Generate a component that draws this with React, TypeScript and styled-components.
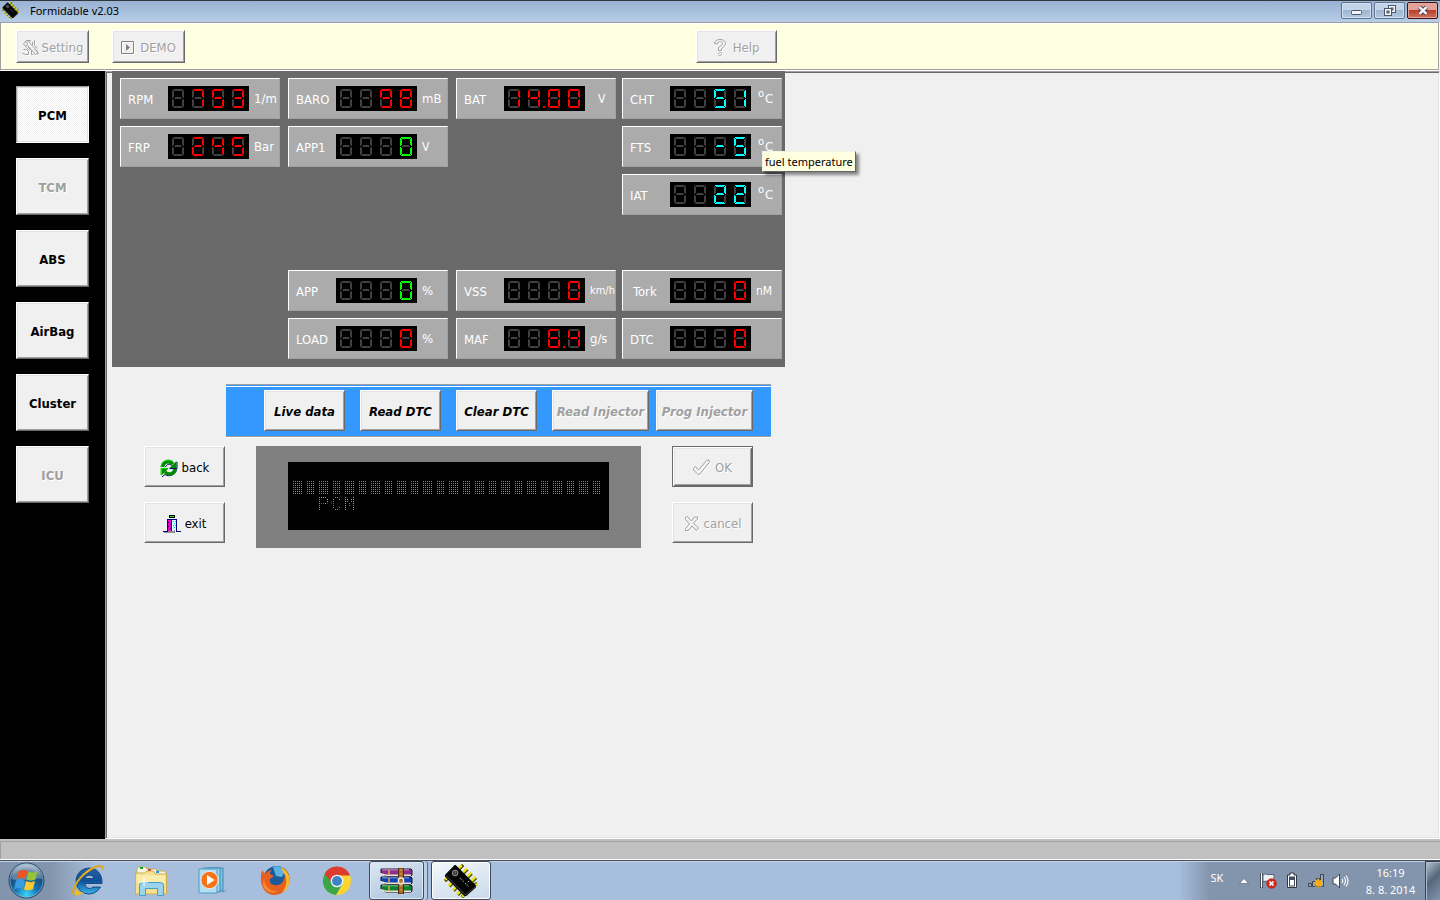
import React from "react";
import styled, { createGlobalStyle, css } from "styled-components";

const ui = `"DejaVu Sans Condensed", "DejaVu Sans", sans-serif`;
const shell = `"Noto Sans", "Open Sans", sans-serif`;

const GlobalStyle = createGlobalStyle`
  *, *::before, *::after { box-sizing: border-box; }
  body { margin: 0; background: #f0f0f0; font-family: ${ui}; font-size: 13px; line-height: 16px; }
  button { font: inherit; color: inherit; padding: 0; margin: 0; cursor: default; }
  svg { display: block; flex: none; }
`;

const Window = styled.div`
  display: flex;
  flex-direction: column;
  min-height: 100vh;
`;

/* ---------- title bar ---------- */

const TitleBar = styled.header`
  display: flex;
  align-items: center;
  height: 22px;
  padding: 0 2px 2px;
  border-top: 1px solid #33373e;
  background: linear-gradient(#98b2d2, #b7cde7);
`;

const Title = styled.h1`
  flex: 1;
  margin: 0 0 0 11px;
  font: 400 11px/16px ${shell};
  color: #000;
`;

const Controls = styled.div`
  display: flex;
  gap: 2px;
`;

const ControlButton = styled.button<{ $danger?: boolean }>`
  display: grid;
  place-items: center;
  width: 31px;
  height: 17px;
  border: 1px solid ${(p) => (p.$danger ? "#4a0d14" : "#62748f")};
  border-radius: 2px;
  box-shadow: inset 0 0 0 1px ${(p) => (p.$danger ? "#e2a79f" : "#cfdff0")};
  background: ${(p) =>
    p.$danger
      ? "linear-gradient(#e3a299 0 45%, #b93f27 50%, #cf7460)"
      : "linear-gradient(#c3d4e8 0 45%, #9eb6d2 50%, #b4c9e2)"};
`;

/* ---------- beige tool bar ---------- */

const ToolBar = styled.div`
  height: 48px;
  margin: 0 1px 1px 0;
  padding: 7px 15px;
  border: 1px solid #a0a0a0;
  box-shadow: inset 1px 1px 0 #fff, 1px 1px 0 #fff;
  background: #ffffe1;
`;

const ToolGroup = styled.div`
  display: flex;
  gap: 23px;
  max-width: 761px;

  > :last-child { margin-left: auto; }
`;

const PushButton = styled.button<{ $w?: number; $h?: number; $bold?: boolean; $italic?: boolean; $isDefault?: boolean; $gap?: number }>`
  display: flex;
  align-items: center;
  justify-content: center;
  gap: ${(p) => p.$gap ?? 5}px;
  flex: none;
  width: ${(p) => p.$w ?? 81}px;
  height: ${(p) => p.$h ?? 41}px;
  padding-top: 2px;
  border: 1px solid;
  border-color: #fff #696969 #696969 #fff;
  box-shadow: inset 1px 1px 0 #e3e3e3, inset -1px -1px 0 #a0a0a0;
  background: #f0f0f0;
  color: #000;
  white-space: nowrap;
  font-weight: ${(p) => (p.$bold ? 700 : 400)};
  font-style: ${(p) => (p.$italic ? "italic" : "normal")};

  ${(p) =>
    p.$isDefault &&
    css`
      border-color: #696969;
      box-shadow: inset 1px 1px 0 #fff, inset -1px -1px 0 #696969, inset 2px 2px 0 #e3e3e3, inset -2px -2px 0 #a0a0a0;
    `}

  &:disabled {
    color: #a0a0a0;
    text-shadow: 1px 1px 0 #fff;
  }

  &[aria-pressed="true"] {
    border-color: #a0a0a0 #fff #fff #a0a0a0;
    box-shadow: inset 1px 1px 0 #d8d8d8, inset -1px -1px 0 #e3e3e3;
    background: repeating-conic-gradient(#fff 0 25%, #f0f0f0 0 50%) 0 0 / 2px 2px;
  }
`;

/* ---------- body ---------- */

const Body = styled.div`
  display: flex;
  flex: 1;
`;

const SideBar = styled.nav`
  display: flex;
  flex-direction: column;
  gap: 15px;
  width: 105px;
  padding: 15px 16px;
  background: #000;
`;

const Main = styled.main`
  flex: 1;
  padding: 0 5px;
  border: 1px solid;
  border-color: #a0a0a0 #fff #fff #a0a0a0;
  box-shadow: inset 1px 1px 0 #696969, inset -1px -1px 0 #e3e3e3;
  background: #f0f0f0;
`;

const GaugePanel = styled.section`
  display: grid;
  grid-template-columns: 168px 168px 166px 160px;
  grid-template-rows: repeat(6, 41px);
  row-gap: 7px;
  width: max-content;
  margin: -1px 0 0 1px;
  padding: 7px 3px 8px 8px;
  background: #696969;
`;

const GaugeBox = styled.div<{ $col: number; $row: number }>`
  position: relative;
  grid-column: ${(p) => p.$col};
  grid-row: ${(p) => p.$row};
  display: flex;
  align-items: center;
  width: 160px;
  padding-left: 7px;
  border: 1px solid;
  border-color: #fff #a0a0a0 #a0a0a0 #fff;
  background: #ababab;
  color: #fff;
`;

const GaugeLabel = styled.span<{ $indent?: boolean }>`
  width: 40px;
  padding-left: ${(p) => (p.$indent ? 3 : 0)}px;
  padding-top: 2px;
`;

const GaugeUnit = styled.span<{ $size?: number; $indent?: boolean }>`
  padding-left: ${(p) => (p.$indent ? 13 : 5)}px;
  font-size: ${(p) => p.$size ?? 13}px;

  sup {
    padding: 0 1px 0 2px;
    font-size: 11px;
    line-height: 1px;
  }
`;

const ToolTip = styled.div`
  position: absolute;
  z-index: 2;
  left: 139px;
  top: 24px;
  padding: 2px;
  border: 1px solid;
  border-color: #f4f4e4 #646464 #646464 #f4f4e4;
  box-shadow: 3px 3px 3px rgba(0, 0, 0, 0.45);
  background: #ffffe1;
  color: #000;
  font: 11px/15px ${shell};
  white-space: nowrap;
`;

/* Order: top, top-right, bottom-right, bottom, bottom-left, top-left, middle */
const SEGMENTS: Array<Array<[number, number, number, number]>> = [
  [[1, 0, 10, 1], [2, 1, 8, 1]],
  [[11, 1, 1, 8], [10, 2, 1, 6]],
  [[11, 10, 1, 8], [10, 11, 1, 6]],
  [[2, 17, 8, 1], [1, 18, 10, 1]],
  [[0, 10, 1, 8], [1, 11, 1, 6]],
  [[0, 1, 1, 8], [1, 2, 1, 6]],
  [[2, 9, 8, 1], [3, 8, 6, 1]],
];

const LIT: Record<string, string> = {
  "0": "012345", "1": "12", "2": "01346", "3": "01236", "4": "1256",
  "5": "02356", "6": "023456", "7": "012", "8": "0123456", "9": "012356",
  "-": "6", " ": "",
};

const LedDisplay = ({ value, color }: { value: string; color: string }) => {
  const dot = value.indexOf(".");
  const digits = value.replace(".", "").padStart(4, " ").split("");
  const dotAfter = dot < 0 ? -1 : 4 - (value.length - 1 - dot);
  return (
    <svg width="81" height="25" shapeRendering="crispEdges" role="img" aria-label={value}>
      <rect width="81" height="25" fill="#000" />
      {digits.map((d, i) =>
        SEGMENTS.map((rects, s) =>
          rects.map(([x, y, w, h], k) => (
            <rect
              key={`${i}-${s}-${k}`}
              x={x + 4 + 20 * i}
              y={y + 3}
              width={w}
              height={h}
              fill={LIT[d].includes(String(s)) ? color : "#404040"}
            />
          ))
        )
      )}
      {dotAfter > 0 && <rect x={20 * dotAfter - 1} y="20" width="2" height="2" fill={color} />}
    </svg>
  );
};

const RED = "#ff0000";
const GREEN = "#00ff00";
const CYAN = "#00ffff";

type Gauge = {
  label: string; value: string; unit: string; color: string; col: number; row: number;
  unitSize?: number; indent?: boolean; unitIndent?: boolean; tip?: string;
};

const GAUGES: Gauge[] = [
  { label: "RPM", value: "753", unit: "1/m", color: RED, col: 1, row: 1 },
  { label: "BARO", value: "98", unit: "mB", color: RED, col: 2, row: 1 },
  { label: "BAT", value: "14.00", unit: "V", color: RED, col: 3, row: 1, unitIndent: true, unitSize: 12 },
  { label: "CHT", value: "51", unit: "°C", color: CYAN, col: 4, row: 1 },
  { label: "FRP", value: "245", unit: "Bar", color: RED, col: 1, row: 2 },
  { label: "APP1", value: "0", unit: "V", color: GREEN, col: 2, row: 2, unitSize: 12 },
  { label: "FTS", value: "-5", unit: "°C", color: CYAN, col: 4, row: 2, tip: "fuel temperature" },
  { label: "IAT", value: "22", unit: "°C", color: CYAN, col: 4, row: 3 },
  { label: "APP", value: "0", unit: "%", color: GREEN, col: 2, row: 5 },
  { label: "VSS", value: "0", unit: "km/h", color: RED, col: 3, row: 5, unitSize: 11 },
  { label: "Tork", value: "0", unit: "nM", color: RED, col: 4, row: 5, unitSize: 12, indent: true },
  { label: "LOAD", value: "0", unit: "%", color: RED, col: 2, row: 6 },
  { label: "MAF", value: "6.4", unit: "g/s", color: RED, col: 3, row: 6 },
  { label: "DTC", value: "0", unit: "", color: RED, col: 4, row: 6 },
];

const ActionBar = styled.div`
  display: flex;
  gap: 15px;
  width: 545px;
  height: 54px;
  margin: 17px 0 8px 115px;
  padding: 5px 0 0 38px;
  border-top: 1px solid #a0a0a0;
  border-bottom: 1px solid #fff;
  background: linear-gradient(#39f 0 1px, #fff 1px 2px, #39f 2px calc(100% - 1px), #a0a0a0 calc(100% - 1px));

  > :last-child { margin-left: -8px; }
`;

const Console = styled.div`
  display: flex;
  align-items: flex-start;
  gap: 31px;
  margin-left: 33px;
`;

const ButtonColumn = styled.div`
  display: flex;
  flex-direction: column;
  gap: 15px;
`;

const LcdFrame = styled.div`
  width: 385px;
  padding: 16px 32px 18px;
  background: #808080;
`;

const LcdScreen = styled.div`
  height: 68px;
  padding: 19px 4px 0 5px;
  background: #000;
`;

const LcdRow = styled.div`
  display: grid;
  grid-template-columns: repeat(24, 13px);
  height: 16px;
  color: #20ff20;
  font: 20px/16px "Liberation Mono", monospace;
`;

const LcdCell = styled.span<{ $blank?: boolean }>`
  display: flex;
  justify-content: center;
  width: 9px;
  height: 13px;
  ${(p) =>
    p.$blank &&
    css`
      background: #858585;
    `}
`;

/* Lets light through only on every second pixel, like the dots of the panel. */
const DotMask = styled.div`
  mask: conic-gradient(#000 25%, transparent 0) -1px 0 / 2px 2px;
`;

const StatusBar = styled.footer`
  height: 21px;
  border-top: 2px solid #c0c0c0;
  border-bottom: 1px solid #fff;
  box-shadow: inset 1px 1px 0 #a0a0a0;
  background: #c0c0c0;
`;

/* ---------- taskbar ---------- */

const TaskBar = styled.nav`
  display: flex;
  height: 40px;
  border-top: 1px solid #454e5b;
  box-shadow: inset 0 1px 0 #c3d3e8;
  background: linear-gradient(90deg, #8395ac 50px, #a7bfdd 96px, #a7bfdd calc(100% - 262px), #8395ac calc(100% - 230px));
  font: 11px/17px ${shell};
  color: #fff;
`;

const StartButton = styled.button`
  width: 59px;
  padding-left: 8px;
  border: 0;
  background: none;
`;

const TaskList = styled.div`
  display: flex;
  flex: 1;
  gap: 2px;
`;

const TaskButton = styled.button<{ $open?: boolean; $stacked?: boolean }>`
  display: grid;
  place-items: center;
  width: 60px;
  border: 0;
  background: none;

  ${(p) =>
    p.$open &&
    css`
      border: 1px solid #3f4b5d;
      border-radius: 3px;
      box-shadow: inset 0 0 0 1px #fff;
      background: linear-gradient(160deg, #f4f8fc, #c9d9eb);
    `}
  ${(p) =>
    p.$stacked &&
    css`
      width: 55px;
      margin-right: 5px;
      background: linear-gradient(160deg, #dde8f3, #a9c1dc);
      box-shadow: inset 0 0 0 1px #dbe7f4, 3px 0 0 0 #b9cde4, 4px 0 0 0 #5d6c81;
    `}
`;

const Tray = styled.div`
  display: flex;
  align-items: center;
`;

const Language = styled.button`
  width: 30px;
  height: 22px;
  margin-bottom: 6px;
  border: 0;
  background: none;
  font: inherit;
`;

const TrayButton = styled.button`
  display: grid;
  place-items: center;
  width: 24px;
  height: 24px;
  border: 0;
  background: none;
`;

const Clock = styled.time`
  width: 73px;
  padding-left: 4px;
  text-align: center;
`;

const ShowDesktop = styled.button`
  align-self: stretch;
  width: 15px;
  border: 1px solid #39434f;
  border-bottom: 0;
  border-right: 0;
  box-shadow: inset 1px 1px 0 #a9b9cb;
  background: linear-gradient(135deg, #b9c6d4, #56677c 45%, #8395ac);
`;

/* ---------- drawings ---------- */

const Embossed = ({ w, h, d }: { w: number; h: number; d: string }) => (
  <svg width={w} height={h} viewBox={`0 0 ${w} ${h}`} fill="none" aria-hidden="true">
    <path d={d} stroke="#fff" transform="translate(1 1)" />
    <path d={d} stroke="#a0a0a0" />
  </svg>
);

const ToolsIcon = () => (
  <Embossed
    w={17}
    h={17}
    d="M1.5 4.5l3-3h4l-1 2 8 9v2l-2 1-8-9-2 1zM3 3h4M4 5h2M12.5 1.5v5l3 3M10.5 3v3M1.5 10.5h3l2 2v3h-4M4.5 8.5l3 3M9.5 11.5v4h2M.5 14.5h2M13 10.5l3 3v2M6 8l3 3"
  />
);

const PlayIcon = () => (
  <svg width="14" height="14" viewBox="0 0 14 14" aria-hidden="true">
    <path d="M1.5 1.5h12v12h-12z" fill="none" stroke="#fff" />
    <path d="M.5 .5h12v12h-12z" fill="none" stroke="#808080" />
    <path d="M5 3l4 3.5L5 10z" fill="#808080" />
  </svg>
);

const QuestionIcon = () => (
  <Embossed w={13} h={18} d="M.5 4.500C1 2 3 .5 6 .5s5.500 1.500 5.500 4-2 3.500-4 5v2h-3v-3c2-1.500 4-2 4-4 0-3-5-2.500-5 .5zM4.500 14.500l1-1h1l1 1v1l-1 1h-1l-1-1z" />
);

const CheckIcon = () => <Embossed w={18} h={17} d="M.5 9.500l2-2 3 3.500 8.500-10h2l.5 2-10 12.500h-1.500l-4.500-4.500z" />;

const CrossIcon = () => (
  <Embossed w={16} h={16} d="M1.500 1.500l2-1 4 4.500 3-4h3v2l-4 4 5 5-2 2.500-4.500-4.500-3.500 4.500h-3v-2l4-4.500-4-4.500z" />
);

const RefreshIcon = () => (
  <svg width="18" height="18" viewBox="0 0 18 18" fill="none" aria-hidden="true">
    <path d="M5.500 8c1.500-3 4-3.500 6-1.500M9.500 9.500h7.500V3" stroke="#000080" />
    <path d="M2.500 8C3 2.500 9 1 13 5" stroke="#008a00" strokeWidth="3.500" />
    <path d="M16.500 2v7h-7z" fill="#008a00" />
    <path d="M1 8C1.500 2 8-1 13 2.500" stroke="#00e000" />
    <path d="M16.500 10.500C16 15.500 9 18.500 5 15.500l-3 2.500" stroke="#000080" />
    <path d="M15 10c-.5 5-6 6.500-10 3" stroke="#008a00" strokeWidth="3.500" />
    <path d="M1.500 16.500v-7h7z" fill="#008a00" />
    <path d="M1 16V9.500h7" stroke="#00e000" />
  </svg>
);

const DoorIcon = () => (
  <svg width="18" height="18" viewBox="0 0 18 18" shapeRendering="crispEdges" aria-hidden="true">
    <rect x="6" y="0" width="6" height="3" fill="#000" />
    <rect x="7" y="1" width="4" height="1" fill="#00ff00" />
    <path d="M2 16h8l2-2v4H1z" fill="#909090" />
    <rect x="5" y="5" width="4" height="11" fill="#f000d0" />
    <rect x="9" y="5" width="5" height="10" fill="#c8feff" />
    <path d="M5 7h1v1H5zM7 9h1v1H7zM5 11h1v1H5zM7 13h1v1H7z" fill="#600080" />
    <path d="M10 6h1v1h-1zM12 6h1v1h-1zM11 8h1v1h-1zM10 10h1v1h-1zM12 10h1v1h-1zM11 12h1v1h-1z" fill="#00d8e8" />
    <rect x="4" y="4" width="10" height="1" fill="#000080" />
    <rect x="4" y="4" width="1" height="13" fill="#000080" />
    <rect x="13" y="4" width="1" height="13" fill="#000080" />
    <rect x="8" y="5" width="1" height="11" fill="#000080" />
    <rect x="0" y="16" width="5" height="1" fill="#000080" />
    <rect x="13" y="16" width="5" height="1" fill="#000080" />
  </svg>
);

const ChipIcon = ({ size }: { size: number }) => (
  <svg width={size} height={size} viewBox="0 0 32 32" aria-hidden="true">
    <g stroke="#4a4600" strokeWidth="3" strokeLinecap="square">
      <path d="M14 5l3-3M18 9l3-3M22 13l3-3M26 17l3-3M28 20l2-1M4 13l-2 2M8 18l-2 2M12 22l-2 2M16 26l-2 2M19 29l-1 1" />
    </g>
    <g stroke="#f4ec00" strokeWidth="2" strokeLinecap="square">
      <path d="M14 4l2-2M18 8l3-3M22 12l3-3M26 16l3-3M29 20l2-1M3 13l-1 1M7 18l-2 2M11 22l-2 2M15 26l-2 2M18 29v1" />
    </g>
    <path d="M11 1l19 19v2l-9 8h-2L1 12v-2l9-9z" fill="#050505" />
    <path d="M2 11l18 18 10-8" fill="none" stroke="#3a3a3a" />
    <circle cx="10.500" cy="8.500" r="2.500" fill="none" stroke="#888" />
    <path d="M10.500 6v5M8 8.500h5" stroke="#888" strokeWidth=".7" />
    <path d="M15 13l4 4M20 18l3 3M23 16v2" stroke="#a8a8a8" strokeDasharray="1 1" />
  </svg>
);

const MinimizeIcon = () => (
  <svg width="11" height="11" viewBox="0 0 11 11" aria-hidden="true">
    <rect x=".5" y="5.500" width="10" height="4" rx="1" fill="#f5f5f5" stroke="#4c566b" />
  </svg>
);

const RestoreIcon = () => (
  <svg width="12" height="11" viewBox="0 0 12 11" fill="#f5f5f5" stroke="#4c566b" aria-hidden="true">
    <rect x="4.500" y=".5" width="7" height="7" />
    <rect x="7" y="3" width="2" height="2" fill="#8fa7c5" />
    <rect x=".5" y="3.500" width="7" height="7" />
    <rect x="3" y="6" width="2" height="2" fill="#8fa7c5" />
  </svg>
);

const CloseIcon = () => (
  <svg width="12" height="11" viewBox="0 0 12 11" aria-hidden="true">
    <path d="M2.500 2.200l7 6.600M9.500 2.200l-7 6.600" stroke="#4c465b" strokeWidth="4.400" />
    <path d="M2.500 2.200l7 6.600M9.500 2.200l-7 6.600" stroke="#f8f8f8" strokeWidth="2.400" />
  </svg>
);

const StartOrb = () => (
  <svg width="37" height="37" viewBox="0 0 37 37" aria-hidden="true">
    <defs>
      <radialGradient id="orb" cx=".5" cy=".9" r=".85">
        <stop offset="0" stopColor="#3fd4f4" />
        <stop offset=".4" stopColor="#126fae" />
        <stop offset=".75" stopColor="#1c4a78" />
        <stop offset="1" stopColor="#9fb6cb" />
      </radialGradient>
    </defs>
    <circle cx="18.500" cy="18.500" r="17.500" fill="url(#orb)" stroke="#284967" />
    <circle cx="18.500" cy="18.500" r="16.500" fill="none" stroke="#9cc0dc" strokeOpacity=".6" />
    <path d="M3 17C5 7 12 3 18.500 3S32 7 34 17c-10-2-20 3-31 0z" fill="#fff" fillOpacity=".3" />
    <path d="M10.500 9.500c3-2 6-2 9-.5l-2 8c-3-2-6-1-9 0z" fill="#ee5522" />
    <path d="M20.500 9.500c3 1.500 6 1.500 9-.5l-2 8.500c-3 1.500-6 1.500-9 0z" fill="#94c43a" />
    <path d="M8 18.500c3-1.500 6-1.500 9 .5l-2 8.500c-3-2-6-2-9 0z" fill="#3c9be0" />
    <path d="M18 19c3 1.500 6 1.500 9 0l-2 8c-3 1.500-6 1.500-9 .5z" fill="#fcc82c" />
  </svg>
);

const IeIcon = () => (
  <svg width="34" height="34" viewBox="0 0 34 34" aria-hidden="true">
    <defs>
      <linearGradient id="ie" x2="0" y2="1">
        <stop offset="0" stopColor="#2c5fa2" />
        <stop offset=".5" stopColor="#104f98" />
        <stop offset="1" stopColor="#35b7ec" />
      </linearGradient>
    </defs>
    <path d="M17 4a13 13 0 1 0 11.500 19h-7.500c-3 3-8 1-8-3.500h17C30.500 10 25 4 17 4zm-4 10.500c1-4.500 8-4.500 9 0z" fill="url(#ie)" stroke="#174a82" />
    <path d="M3 31C-2 28 7 14 16 8 24 2 32 0 30.500 6c3-7-7-5-15 .5C5 14-4 30 3 31z" fill="#f6ca2d" stroke="#dba213" />
    <path d="M3 31c3 1 7-1 9-3-4 1-7 0-7-4-2 3-3 6-2 7z" fill="#f3bc20" />
  </svg>
);

const FolderIcon = () => (
  <svg width="34" height="32" viewBox="0 0 34 32" aria-hidden="true">
    <path d="M3 4l1-2h8l1 2h9l1 2h8l1 2v20H2z" fill="#f7f5e8" stroke="#c7ab52" />
    <rect x="6" y="2" width="3" height="2" fill="#18a832" />
    <rect x="14" y="4" width="3" height="2" fill="#c0392b" />
    <rect x="22" y="6" width="3" height="2" fill="#2794e0" />
    <path d="M1.500 8h9l2-2h7l2 3h11v20h-31z" fill="#f5e08d" stroke="#cdae53" />
    <path d="M3 10h28v8H3z" fill="#fbf0b4" fillOpacity=".8" />
    <path d="M5.500 30.500v-10q0-3 3-3h18q3 0 3 3v10h-6v-7h-12v7z" fill="#9bd4ee" stroke="#459fc8" />
    <path d="M10 12v9M6 17h8" stroke="#fff" />
  </svg>
);

const MediaIcon = () => (
  <svg width="30" height="27" viewBox="0 0 30 27" aria-hidden="true">
    <path d="M9 1h16v23H9z" fill="#7fc0e2" stroke="#3d8bb5" />
    <path d="M5 1h17v24H5z" fill="#9fd2ec" stroke="#3d8bb5" />
    <path d="M1 2h18v24H1z" fill="#b5def2" stroke="#4a9bc4" />
    <circle cx="11.500" cy="13" r="8.700" fill="#f5761a" stroke="#e9eef2" />
    <path d="M9 8l7.500 5L9 18z" fill="#fff" />
    <path d="M24 24l5-1-4 3z" fill="#6e86a2" fillOpacity=".6" />
  </svg>
);

const FirefoxIcon = () => (
  <svg width="31" height="31" viewBox="0 0 31 31" aria-hidden="true">
    <circle cx="16.500" cy="14" r="13" fill="#1b5b9c" />
    <path d="M13 2c5-2 10 1 12 4l-3 6-6-1z" fill="#59b3e2" />
    <path d="M2 5l3 4c2-3 5-4 7-4-2 1-2 3-2 4l4 2-4 3c-1 3 1 6 5 6 4 1 8-2 9-6 2-5 0-9-3-12 7 3 10 10 8 16-2 8-8 12-15 12C5 30-2 20 2 5z" fill="#e6601f" />
    <path d="M21 2c7 4 10 10 8 17-1 4-4 7-7 9 5-7 6-15 1-21z" fill="#fbb72c" />
    <path d="M4 15c1 8 8 12 14 11-8 5-18-3-14-11z" fill="#f78d2c" />
  </svg>
);

const ChromeIcon = () => (
  <svg width="30" height="30" viewBox="0 0 30 30" aria-hidden="true">
    <circle cx="15" cy="15" r="14" fill="#fcd530" />
    <path d="M2.500 8A14 14 0 0 1 28 9.500H15L9.500 18z" fill="#dc3b2d" />
    <path d="M2.700 8A14 14 0 0 0 14 29l6.500-11L10 17z" fill="#3aa648" />
    <circle cx="15" cy="15" r="6.300" fill="#f3f6f8" />
    <circle cx="15" cy="15" r="5" fill="#3d83c6" />
  </svg>
);

const ArchiveIcon = () => (
  <svg width="33" height="26" viewBox="0 0 33 26" aria-hidden="true">
    {[["#8d2f8a", "#d98ad4", 1], ["#1440b8", "#78a4f0", 9], ["#0f8030", "#6fd082", 17]].map(([dark, light, y]) => (
      <g key={String(y)} transform={`translate(0 ${y})`}>
        <path d="M1 0h30l1 1v5l-1 1H6L1 4z" fill={String(dark)} stroke="#1c1420" />
        <path d="M2 .8h27" stroke={String(light)} />
        <path d="M1 4l5 1.500h25V7H6L1 5.500z" fill="#e9e2cf" />
        <path d="M9 1v5" stroke="#d9b13a" strokeWidth="1.500" />
      </g>
    ))}
    <path d="M18.500 0h5v26h-5z" fill="#a8692b" stroke="#4e2d12" />
    <path d="M21 1v24" stroke="#d9a65d" strokeDasharray="2 2" />
    <rect x="18.500" y="10" width="5" height="6" rx="2" fill="none" stroke="#f4ecd2" strokeWidth="1.500" />
  </svg>
);

const ArrowUpIcon = () => (
  <svg width="10" height="6" viewBox="0 0 10 6" aria-hidden="true">
    <path d="M5 .5l4.500 5h-9z" fill="#fff" stroke="#4a576a" strokeWidth=".6" />
  </svg>
);

const FlagIcon = () => (
  <svg width="17" height="17" viewBox="0 0 17 17" aria-hidden="true">
    <path d="M1.500 1v15" stroke="#36404e" strokeWidth="3" />
    <path d="M3 2.500c3-1.500 4 1 7 0h4v7c-4 1-6-1-11 0z" fill="#f0f3f6" stroke="#56647a" />
    <path d="M1.500 1v14.500" stroke="#fff" strokeWidth="1.200" />
    <circle cx="11.500" cy="11.500" r="4.800" fill="#d92a1e" stroke="#a3160e" strokeWidth=".6" />
    <path d="M9.500 9.500l4 4M13.500 9.500l-4 4" stroke="#fff" strokeWidth="1.600" />
  </svg>
);

const BatteryIcon = () => (
  <svg width="12" height="17" viewBox="0 0 12 17" aria-hidden="true">
    <path d="M4 1h4v2h2.500v12.500h-9V3H4z" fill="#fff" stroke="#2f3742" />
    <rect x="3.500" y="5" width="5" height="9" fill="#fff" stroke="#3d4653" />
    <rect x="4" y="5" width="4" height="3" fill="#46505e" />
  </svg>
);

const SignalIcon = () => (
  <svg width="17" height="15" viewBox="0 0 17 15" aria-hidden="true">
    <path d="M.5 10.500h3v3h-3zM4.500 8.500h3v5h-3zM8.500 5.500h3v8h-3zM12.500 1.500h3v12h-3z" fill="#9aa7b8" stroke="#3b4553" />
    <path d="M10.500 5l1 2.600 2.600-1-.8 2.500 2.200 1.300-2.500 1 .9 2.500-2.500-.9-1 2-1-2-2.500.9.9-2.500-2.500-1 2.200-1.300-.8-2.500 2.600 1z" fill="#fcae14" />
  </svg>
);

const SpeakerIcon = () => (
  <svg width="17" height="16" viewBox="0 0 17 16" fill="none" aria-hidden="true">
    <path d="M1 5h2.500l4-4v14l-4-4H1z" fill="#fff" stroke="#3b4553" />
    <path d="M10 6q1.500 2 0 4M12 4q3 4 0 8M14 2.500q4 5.500 0 11" stroke="#fff" strokeWidth="1.100" />
  </svg>
);

/* ---------- page ---------- */

const MODULES = [
  { name: "PCM", active: true },
  { name: "TCM", disabled: true },
  { name: "ABS" },
  { name: "AirBag" },
  { name: "Cluster" },
  { name: "ICU", disabled: true },
];

const ACTIONS = [
  { name: "Live data" },
  { name: "Read DTC" },
  { name: "Clear DTC" },
  { name: "Read Injector", wide: true },
  { name: "Prog Injector", wide: true },
];

export default function App() {
  return (
    <Window>
      <GlobalStyle />
      <TitleBar>
        <ChipIcon size={17} />
        <Title>Formidable v2.03</Title>
        <Controls>
          <ControlButton aria-label="Minimize"><MinimizeIcon /></ControlButton>
          <ControlButton aria-label="Restore"><RestoreIcon /></ControlButton>
          <ControlButton $danger aria-label="Close"><CloseIcon /></ControlButton>
        </Controls>
      </TitleBar>

      <ToolBar>
        <ToolGroup>
          <PushButton $w={73} $h={33} $gap={3} disabled><ToolsIcon />Setting</PushButton>
          <PushButton $w={73} $h={33} disabled><PlayIcon />DEMO</PushButton>
          <PushButton $w={81} $h={33} $gap={6} disabled><QuestionIcon />Help</PushButton>
        </ToolGroup>
      </ToolBar>

      <Body>
        <SideBar aria-label="Modules">
          {MODULES.map((m) => (
            <PushButton key={m.name} $w={73} $h={57} $bold disabled={m.disabled} aria-pressed={!!m.active}>
              {m.name}
            </PushButton>
          ))}
        </SideBar>

        <Main>
          <GaugePanel aria-label="Live values">
            {GAUGES.map((g) => (
              <GaugeBox key={g.label} $col={g.col} $row={g.row}>
                <GaugeLabel $indent={g.indent}>{g.label}</GaugeLabel>
                <LedDisplay value={g.value} color={g.color} />
                <GaugeUnit $size={g.unitSize} $indent={g.unitIndent}>
                  {g.unit === "°C" ? <><sup>o</sup>C</> : g.unit}
                </GaugeUnit>
                {g.tip && <ToolTip role="tooltip">{g.tip}</ToolTip>}
              </GaugeBox>
            ))}
          </GaugePanel>

          <ActionBar>
            {ACTIONS.map((a) => (
              <PushButton key={a.name} $w={a.wide ? 97 : 81} $bold $italic disabled={a.wide}>
                {a.name}
              </PushButton>
            ))}
          </ActionBar>

          <Console>
            <ButtonColumn>
              <PushButton $gap={4}><RefreshIcon />back</PushButton>
              <PushButton $gap={4}><DoorIcon />exit</PushButton>
            </ButtonColumn>
            <LcdFrame>
              <LcdScreen>
                <DotMask>
                  <LcdRow>
                    {Array.from({ length: 24 }, (_, i) => <LcdCell key={i} $blank />)}
                  </LcdRow>
                  <LcdRow>
                    {"  PCM".split("").map((c, i) => <LcdCell key={i}>{c}</LcdCell>)}
                  </LcdRow>
                </DotMask>
              </LcdScreen>
            </LcdFrame>
            <ButtonColumn>
              <PushButton $gap={4} $isDefault disabled><CheckIcon />OK</PushButton>
              <PushButton $gap={4} disabled><CrossIcon />cancel</PushButton>
            </ButtonColumn>
          </Console>
        </Main>
      </Body>

      <StatusBar />

      <TaskBar aria-label="Taskbar">
        <StartButton aria-label="Start"><StartOrb /></StartButton>
        <TaskList>
          <TaskButton aria-label="Internet Explorer"><IeIcon /></TaskButton>
          <TaskButton aria-label="Explorer"><FolderIcon /></TaskButton>
          <TaskButton aria-label="Media Player"><MediaIcon /></TaskButton>
          <TaskButton aria-label="Firefox"><FirefoxIcon /></TaskButton>
          <TaskButton aria-label="Chrome"><ChromeIcon /></TaskButton>
          <TaskButton $open $stacked aria-label="WinRAR"><ArchiveIcon /></TaskButton>
          <TaskButton $open aria-label="Formidable"><ChipIcon size={34} /></TaskButton>
        </TaskList>
        <Tray>
          <Language>SK</Language>
          <TrayButton aria-label="Show hidden icons"><ArrowUpIcon /></TrayButton>
          <TrayButton aria-label="Action Center"><FlagIcon /></TrayButton>
          <TrayButton aria-label="Battery"><BatteryIcon /></TrayButton>
          <TrayButton aria-label="Network"><SignalIcon /></TrayButton>
          <TrayButton aria-label="Volume"><SpeakerIcon /></TrayButton>
          <Clock>16:19<br />8. 8. 2014</Clock>
          <ShowDesktop aria-label="Show desktop" />
        </Tray>
      </TaskBar>
    </Window>
  );
}
